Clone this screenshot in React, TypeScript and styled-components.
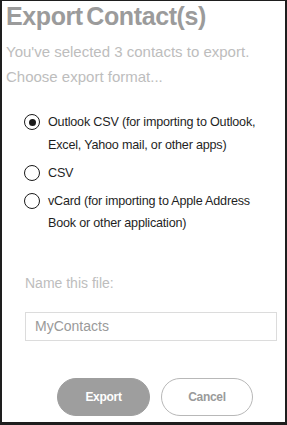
import React, { useState } from "react";
import styled, { createGlobalStyle } from "styled-components";

const Global = createGlobalStyle`
  html, body { margin: 0; padding: 0; background: #fff; }
  body { font-family: "Liberation Sans", Arial, sans-serif; }
  * { box-sizing: border-box; }
`;

const Frame = styled.div`
  width: 287px;
  height: 425px;
  border: 2px solid #1e1e1e;
  border-top-width: 1px;
  border-bottom-width: 3px;
  background: #fff;
  display: flex;
  flex-direction: column;
  padding: 0 4px;
  overflow: hidden;
`;

const Title = styled.h1`
  margin: 1px 0 0 0;
  font-size: 25px;
  line-height: 28px;
  font-weight: 700;
  letter-spacing: -0.4px;
  word-spacing: -3px;
  color: #9b9b9b;
`;

const InfoBlock = styled.div`
  margin-top: 9px;
  display: flex;
  flex-direction: column;
`;

const Info = styled.p`
  margin: 0;
  font-size: 15px;
  line-height: 25px;
  color: #bdbdbd;
`;

const Options = styled.div`
  margin-top: 22px;
  padding-left: 18px;
  display: flex;
  flex-direction: column;
  gap: 5.5px;
`;

const Option = styled.label`
  display: flex;
  align-items: flex-start;
  gap: 8px;
  cursor: pointer;
`;

const Circle = styled.span<{ $checked: boolean }>`
  flex: none;
  width: 16px;
  height: 16px;
  margin-top: 3.25px;
  border-radius: 50%;
  border: 1.5px solid #1a1a1a;
  display: flex;
  align-items: center;
  justify-content: center;
  &::after {
    content: "";
    width: 7px;
    height: 7px;
    border-radius: 50%;
    background: #1a1a1a;
    display: ${(p) => (p.$checked ? "block" : "none")};
  }
`;

const OptionText = styled.span`
  font-size: 12.6px;
  line-height: 22.5px;
  letter-spacing: -0.2px;
  color: #1f1f1f;
`;

const FileSection = styled.div`
  margin-top: 38px;
  padding-left: 19px;
  display: flex;
  flex-direction: column;
`;

const Label = styled.div`
  font-size: 14px;
  line-height: 20px;
  color: #bdbdbd;
`;

const NameInput = styled.input`
  margin-top: 19px;
  width: 252px;
  height: 29px;
  border: 1px solid #dcdcdc;
  padding: 0 9px;
  font-family: "Liberation Sans", Arial, sans-serif;
  font-size: 14px;
  color: #9a9a9a;
  background: #fff;
  outline: none;
`;

const Buttons = styled.div`
  margin-top: 37px;
  display: flex;
  gap: 11px;
  padding-left: 51px;
`;

const Button = styled.button<{ $primary?: boolean }>`
  width: ${(p) => (p.$primary ? 93 : 92)}px;
  height: 38px;
  border-radius: 19px;
  padding: 0;
  font-family: "Liberation Sans", Arial, sans-serif;
  font-size: 12px;
  font-weight: 700;
  letter-spacing: -0.3px;
  cursor: pointer;
  border: 1px solid ${(p) => (p.$primary ? "#9e9e9e" : "#b8b8b8")};
  background: ${(p) => (p.$primary ? "#9e9e9e" : "#fff")};
  color: ${(p) => (p.$primary ? "#fff" : "#9a9a9a")};
`;

const formats = [
  { id: "outlook", label: "Outlook CSV (for importing to Outlook, Excel, Yahoo mail, or other apps)" },
  { id: "csv", label: "CSV" },
  { id: "vcard", label: "vCard (for importing to Apple Address Book or other application)" },
];

export default function App() {
  const [sel, setSel] = useState("outlook");
  const [name, setName] = useState("MyContacts");
  return (
    <>
      <Global />
      <Frame>
        <Title>Export Contact(s)</Title>
        <InfoBlock>
          <Info>You've selected 3 contacts to export.</Info>
          <Info>Choose export format...</Info>
        </InfoBlock>
        <Options>
          {formats.map((f) => (
            <Option key={f.id} onClick={() => setSel(f.id)}>
              <Circle $checked={sel === f.id} />
              <OptionText>{f.label}</OptionText>
            </Option>
          ))}
        </Options>
        <FileSection>
          <Label>Name this file:</Label>
          <NameInput value={name} onChange={(e) => setName(e.target.value)} />
        </FileSection>
        <Buttons>
          <Button $primary>Export</Button>
          <Button>Cancel</Button>
        </Buttons>
      </Frame>
    </>
  );
}
